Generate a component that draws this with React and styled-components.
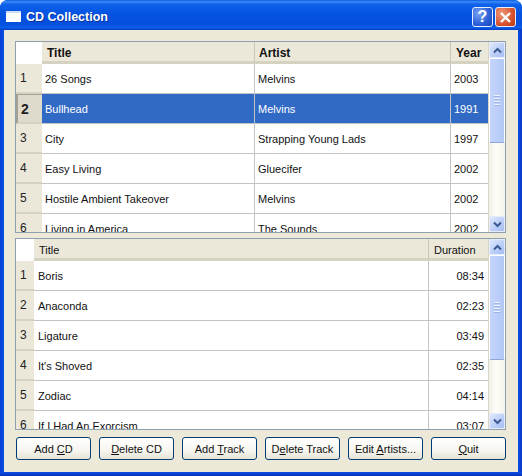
import React from "react";
import styled, { createGlobalStyle } from "styled-components";

const Global = createGlobalStyle`
  html, body { margin: 0; padding: 0; background: #fff; }
  body { font-family: "Liberation Sans", Arial, sans-serif; }
`;

const Win = styled.div`
  width: 522px;
  height: 476px;
  box-sizing: border-box;
  display: flex;
  flex-direction: column;
  background: linear-gradient(90deg, #0a3fd8 0, #0a4fe6 4px, #0a4fe6 518px, #0838c8 522px);
  border-radius: 8px 8px 0 0;
  overflow: hidden;
  padding: 0 4px;
`;

const TitleBar = styled.div`
  height: 30px;
  margin: 0 -4px;
  padding: 0 6px;
  flex: none;
  display: flex;
  align-items: center;
  gap: 2px;
  background: linear-gradient(180deg, #0a5ae0 0%, #3a8cf8 6%, #0f62ea 14%, #0553e2 45%, #0450de 80%, #0a5cea 92%, #0340c0 100%);
`;

const AppIcon = styled.svg`
  width: 15px;
  height: 11px;
  margin: 3px 3px 0 0;
  flex: none;
`;

const TitleText = styled.span`
  flex: 1;
  color: #fff;
  font-size: 12.5px;
  font-weight: 700;
  text-shadow: 1px 1px 0 #0a2f9c;
  margin-top: 4px;
`;

const CaptionButton = styled.div`
  width: 21px;
  height: 20px;
  margin-top: 4px;
  box-sizing: border-box;
  border: 1px solid #e8eefc;
  border-radius: 3px;
  background: ${(p) =>
    p.$close
      ? "radial-gradient(circle at 30% 30%, #ee9a7c, #d8532e 60%, #b9360f)"
      : "radial-gradient(circle at 30% 30%, #7aa2f4, #2a5fd8 60%, #1a44b8)"};
  display: flex;
  align-items: center;
  justify-content: center;
  color: #fff;
  font-size: 16px;
  font-weight: 700;
  line-height: 1;
`;

const Body = styled.div`
  flex: 1;
  min-height: 0;
  background: #ece9d8;
  display: flex;
  flex-direction: column;
  padding: 11px 12px 12px 11px;
`;

const Footer = styled.div`
  height: 4px;
  flex: none;
  margin: 0 -4px;
  background: linear-gradient(180deg, #0a4fe6, #0831b8);
`;

const Table = styled.div`
  height: 192px;
  margin-bottom: ${(p) => p.$gap}px;
  flex: none;
  box-sizing: border-box;
  border: 1px solid #8ea0ae;
  background: #fff;
  display: flex;
  overflow: hidden;
`;

const Sheet = styled.div`
  flex: 1;
  min-width: 0;
  overflow: hidden;
  display: grid;
  grid-template-columns: ${(p) => p.$cols};
  grid-auto-rows: 30px;
  grid-template-rows: 22px;
  align-content: start;
`;

const Corner = styled.div`
  background: #fff;
`;

const Head = styled.div`
  box-sizing: border-box;
  background: #ebe8da;
  border-bottom: 3px solid #d6d2c2;
  border-right: 1px solid ${(p) => (p.$last ? "#ebe8da" : "#c9c6b6")};
  padding: 2px 4px 0 ${(p) => p.$pad}px;
  display: flex;
  align-items: center;
  font-size: ${(p) => (p.$bold ? 12 : 11)}px;
  color: #111;
  font-weight: ${(p) => (p.$bold ? 700 : 400)};
`;

const RowHead = styled.div`
  box-sizing: border-box;
  background: ${(p) => (p.$current ? "#dedbcd" : "#ebe8da")};
  border-bottom: 2px solid #d6d2c2;
  border-left: ${(p) => (p.$current ? "2px solid #a3a196" : "0")};
  border-top: ${(p) => (p.$current ? "1px solid #a3a196" : "0")};
  display: flex;
  align-items: center;
  padding-left: ${(p) => (p.$current ? 3 : 4)}px;
  font-size: ${(p) => (p.$current ? 14 : 12)}px;
  font-weight: ${(p) => (p.$current ? 700 : 400)};
  color: #222;
`;

const Cell = styled.div`
  box-sizing: border-box;
  background: ${(p) => (p.$selected ? "#316ac5" : "#fff")};
  color: ${(p) => (p.$selected ? "#fff" : "#111")};
  border-bottom: 1px solid #c4c4c4;
  border-right: 1px solid ${(p) => (p.$last ? "transparent" : "#c4c4c4")};
  padding-left: ${(p) => p.$pad}px;
  padding-right: 4px;
  display: flex;
  align-items: center;
  justify-content: ${(p) => (p.$right ? "flex-end" : "flex-start")};
  font-size: 11px;
  white-space: nowrap;
  overflow: hidden;
`;

const Scroll = styled.div`
  width: 16px;
  flex: none;
  background: linear-gradient(90deg, #f0efe6, #fdfdf8 40%, #f4f3ea);
  display: flex;
  flex-direction: column;
  border-left: 1px solid #d8d6ca;
`;

const ScrollButton = styled.div`
  height: 16px;
  flex: none;
  box-sizing: border-box;
  border: 1px solid #e4ecfb;
  border-radius: 2px;
  background: linear-gradient(135deg, #dfe8fd, #b9cdf7 60%, #a6bdf0);
  display: flex;
  align-items: center;
  justify-content: center;
`;

const Thumb = styled.div`
  height: ${(p) => p.$height}px;
  flex: none;
  box-sizing: border-box;
  border: 1px solid #fff;
  border-bottom-color: #8ea6d8;
  border-radius: 2px;
  background: linear-gradient(90deg, #c4d4fb, #bccffa 50%, #b3c7f4);
  display: flex;
  flex-direction: column;
  align-items: center;
  justify-content: center;
  gap: 1px;
`;

const Grip = styled.div`
  width: 6px;
  height: 1px;
  background: #eef3fe;
  border-bottom: 1px solid #9db4e6;
`;

const Spacer = styled.div`
  flex: 1;
`;

const Buttons = styled.div`
  display: flex;
  gap: 8px;
  margin-top: 7px;
  padding-left: 1px;
`;

const Btn = styled.button`
  width: 75px;
  height: 23px;
  padding: 0;
  box-sizing: border-box;
  border: 1px solid #003c74;
  border-radius: 3px;
  background: linear-gradient(180deg, #fff 0%, #f6f5ef 60%, #e6e3d6 100%);
  font-family: inherit;
  font-size: 11px;
  color: #111;
  white-space: nowrap;
`;

const Chevron = ({ down }) => (
  <svg width="9" height="7" viewBox="0 0 9 7">
    <path
      d={down ? "M1 1.5 L4.5 5 L8 1.5" : "M1 5.5 L4.5 2 L8 5.5"}
      fill="none"
      stroke="#3c5a94"
      strokeWidth="2"
    />
  </svg>
);

const Scrollbar = ({ thumb }) => (
  <Scroll>
    <ScrollButton><Chevron /></ScrollButton>
    <Thumb $height={thumb}>
      <Grip /><Grip /><Grip /><Grip />
    </Thumb>
    <Spacer />
    <ScrollButton><Chevron down /></ScrollButton>
  </Scroll>
);

const cds = [
  ["26 Songs", "Melvins", "2003"],
  ["Bullhead", "Melvins", "1991"],
  ["City", "Strapping Young Lads", "1997"],
  ["Easy Living", "Gluecifer", "2002"],
  ["Hostile Ambient Takeover", "Melvins", "2002"],
  ["Living in America", "The Sounds", "2002"],
];

const tracks = [
  ["Boris", "08:34"],
  ["Anaconda", "02:23"],
  ["Ligature", "03:49"],
  ["It's Shoved", "02:35"],
  ["Zodiac", "04:14"],
  ["If I Had An Exorcism", "03:07"],
];

export default function App() {
  return (
    <Win>
      <Global />
      <TitleBar>
        <AppIcon viewBox="0 0 15 11">
          <rect x="0" y="0" width="15" height="11" fill="#fff" />
          <rect x="0" y="0" width="15" height="2" fill="#cfdcf5" />
        </AppIcon>
        <TitleText>CD Collection</TitleText>
        <CaptionButton>?</CaptionButton>
        <CaptionButton $close>
          <svg width="13" height="13" viewBox="0 0 13 13">
            <path d="M2 2 L11 11 M11 2 L2 11" stroke="#fff" strokeWidth="2.4" />
          </svg>
        </CaptionButton>
      </TitleBar>
      <Body>
        <Table $gap={5}>
          <Sheet $cols="26px 213px 196px 38px">
            <Corner />
            <Head $bold $pad={5}>Title</Head>
            <Head $bold $pad={4}>Artist</Head>
            <Head $bold $last $pad={5}>Year</Head>
            {cds.map(([t, a, y], i) => (
              <React.Fragment key={t}>
                <RowHead $current={i === 1}>{i + 1}</RowHead>
                <Cell $pad={3} $selected={i === 1}>{t}</Cell>
                <Cell $pad={3} $selected={i === 1}>{a}</Cell>
                <Cell $pad={3} $last $selected={i === 1}>{y}</Cell>
              </React.Fragment>
            ))}
          </Sheet>
          <Scrollbar thumb={85} />
        </Table>
        <Table $gap={0}>
          <Sheet $cols="18px 395px 60px">
            <Corner />
            <Head $pad={5}>Title</Head>
            <Head $last $pad={5}>Duration</Head>
            {tracks.map(([t, d], i) => (
              <React.Fragment key={t}>
                <RowHead>{i + 1}</RowHead>
                <Cell $pad={4}>{t}</Cell>
                <Cell $right $last>{d}</Cell>
              </React.Fragment>
            ))}
          </Sheet>
          <Scrollbar thumb={105} />
        </Table>
        <Buttons>
          <Btn>Add <u>C</u>D</Btn>
          <Btn><u>D</u>elete CD</Btn>
          <Btn>Add <u>T</u>rack</Btn>
          <Btn>D<u>e</u>lete Track</Btn>
          <Btn>Edit <u>A</u>rtists...</Btn>
          <Btn><u>Q</u>uit</Btn>
        </Buttons>
      </Body>
      <Footer />
    </Win>
  );
}
